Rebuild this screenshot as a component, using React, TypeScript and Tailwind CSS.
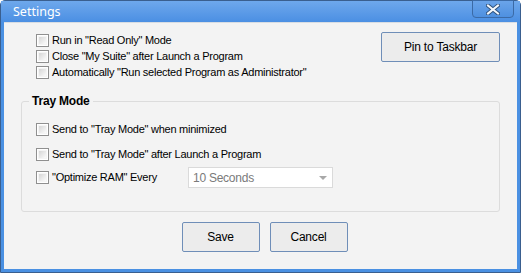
import React from "react";

function Check() {
  return (
    <span className="flex h-[13px] w-[13px] shrink-0 items-center justify-center border border-[#8f8f8f] bg-white">
      <span className="h-[9px] w-[9px] border border-[#f4f4f4] bg-gradient-to-br from-[#d6d6d6] to-[#fbfbfb]" />
    </span>
  );
}

function CheckRow({ label, className = "" }: { label: string; className?: string }) {
  return (
    <label className={`flex items-center gap-[3px] ${className}`}>
      <Check />
      <span className="leading-none">{label}</span>
    </label>
  );
}

function Btn({ children, className = "" }: { children: React.ReactNode; className?: string }) {
  return (
    <button className={`flex h-[30px] items-center justify-center rounded-[2px] border border-[#6f8eb8] bg-[#ececec] text-[12px] tracking-[-0.2px] text-black ${className}`}>
      {children}
    </button>
  );
}

export default function App() {
  return (
    <div
      className="flex h-[273px] w-[521px] flex-col rounded-t-[5px] border border-[#3a5f8f] bg-[#4a90e2] px-[3px] pb-[3px]"
      style={{ fontFamily: '"Liberation Sans", Arial, sans-serif' }}
    >
      {/* title bar */}
      <div className="flex h-[21px] items-start justify-between bg-gradient-to-b from-[#6ea8ec] to-[#4b8fe3] -mx-[3px] px-[3px]">
        <span
          className="pl-[9px] pt-[3px] text-[12.5px] leading-[16px] text-white"
          style={{ fontFamily: '"Noto Sans", "Open Sans", sans-serif' }}
        >
          Settings
        </span>
        <div className="-mt-px mr-[3px] flex h-[18px] w-[42px] items-center justify-center rounded-b-[4px] border border-[#3b6aa6] bg-gradient-to-b from-[#6aa4ea] to-[#4e90e0]">
          <svg width="14" height="11" viewBox="0 0 14 11">
            <path d="M2 1.5 L12 9.5 M12 1.5 L2 9.5" stroke="#2f527c" strokeWidth="4" strokeLinecap="square" />
            <path d="M2 1.5 L12 9.5 M12 1.5 L2 9.5" stroke="#f4f7fb" strokeWidth="2" strokeLinecap="square" />
          </svg>
        </div>
      </div>

      {/* client area */}
      <div className="flex flex-1 flex-col border-t border-[#d8dde3] bg-[#f3f3f3] text-[11px] tracking-[-0.25px] text-black">
        <div className="flex justify-between pl-[32px] pr-[17px] pt-[9px]">
          <div className="flex flex-col">
            <CheckRow label={'Run in "Read Only" Mode'} className="h-[16px]" />
            <CheckRow label={'Close "My Suite" after Launch a Program'} className="h-[16px]" />
            <CheckRow label={'Automatically "Run selected Program as Administrator"'} className="h-[16px]" />
          </div>
          <Btn className="w-[119px]">Pin to Taskbar</Btn>
        </div>

        <fieldset className="mx-[17px] mt-[14px] h-[118px] rounded-[3px] border border-[#dcdcdc] pl-[14px] pr-[10px]">
          <legend className="-ml-[7px] px-[3px] text-[12px] font-bold leading-[14px] tracking-[-0.2px]">Tray Mode</legend>
          <CheckRow label={'Send to "Tray Mode" when minimized'} className="mt-[14px] h-[14px]" />
          <CheckRow label={'Send to "Tray Mode" after Launch a Program'} className="mt-[11px] h-[14px]" />
          <div className="mt-[6px] flex items-center">
            <CheckRow label={'"Optimize RAM" Every'} className="w-[152px]" />
            <div className="flex h-[21px] w-[145px] items-center justify-between border border-[#dadada] bg-white pl-[4px] pr-[5px] text-[12px] text-[#7a7a7a]">
              <span>10 Seconds</span>
              <svg width="8" height="4" viewBox="0 0 8 4">
                <path d="M0 0 L8 0 L4 4 Z" fill="#a8a8a8" />
              </svg>
            </div>
          </div>
        </fieldset>

        <div className="mt-[10px] flex justify-center gap-[10px] pl-[8px]">
          <Btn className="w-[78px]">Save</Btn>
          <Btn className="w-[78px]">Cancel</Btn>
        </div>
      </div>
    </div>
  );
}
